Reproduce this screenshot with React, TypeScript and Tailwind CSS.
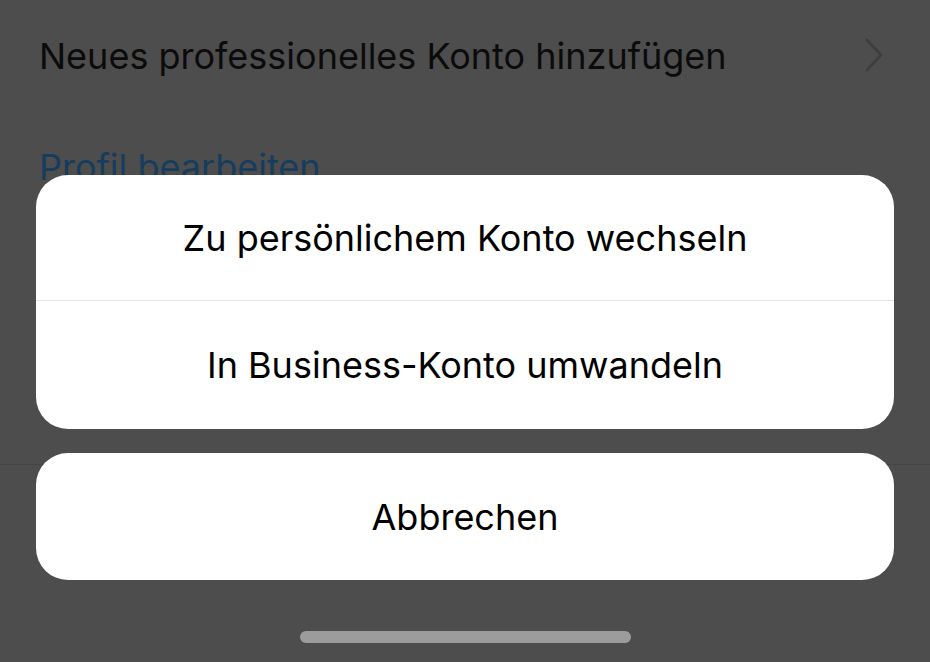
const font = { fontFamily: 'Inter, "Noto Sans", sans-serif' }

function SheetButton({ label, className = '' }: { label: string; className?: string }) {
  return (
    <button className={`flex w-full items-center justify-center text-[36px] text-black ${className}`}>
      {label}
    </button>
  )
}

export default function App() {
  return (
    <div className="relative h-[662px] w-[930px] overflow-hidden bg-[#4d4d4d]" style={font}>
      {/* dimmed page behind the sheet */}
      <div className="flex flex-col">
        <div className="flex h-[112px] items-center justify-between pl-[39px] pr-[46px]">
          <span className="text-[36px] text-[#0b0b0b]">Neues professionelles Konto hinzufügen</span>
          <svg width="20" height="34" viewBox="0 0 20 34" fill="none" className="mt-[-2px]">
            <path d="M3 2 L17 17 L3 32" stroke="#3e3e3e" strokeWidth="2.6" strokeLinecap="round" strokeLinejoin="round" />
          </svg>
        </div>
        <div className="pl-[39px] pt-[28px] text-[36px] text-[#173c5d]">Profil bearbeiten</div>
        <div className="mt-[270px] h-px bg-[#454545]" />
      </div>

      {/* action sheet */}
      <div className="absolute left-[36px] right-[36px] top-[175px] flex flex-col gap-[24px]">
        <div className="flex flex-col overflow-hidden rounded-[32px] bg-white">
          <SheetButton label="Zu persönlichem Konto wechseln" className="h-[126px] border-b border-[#e2e2e2]" />
          <SheetButton label="In Business-Konto umwandeln" className="h-[128px]" />
        </div>
        <div className="overflow-hidden rounded-[32px] bg-white">
          <SheetButton label="Abbrechen" className="h-[127px]" />
        </div>
      </div>

      {/* home indicator */}
      <div className="absolute bottom-[19px] left-[300px] h-[12px] w-[331px] rounded-full bg-[#9c9c9c]" />
    </div>
  )
}
